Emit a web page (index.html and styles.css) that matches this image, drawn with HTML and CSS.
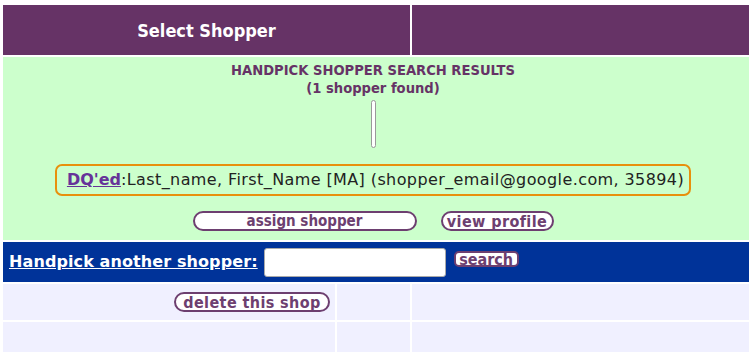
FILE: index.html
```html
<!DOCTYPE html>
<html lang="en">
<head>
  <meta charset="UTF-8">
  <title>Select Shopper</title>
  <link rel="stylesheet" href="styles.css">
</head>
<body>
  <!-- Main shop table -->
  <table class="shop">
    <colgroup>
      <col class="col-main">
      <col class="col-mid">
      <col>
    </colgroup>

    <!-- Title row -->
    <tr class="head">
      <td colspan="2" class="title">Select Shopper</td>
      <td></td>
    </tr>

    <!-- Search results -->
    <tr class="results">
      <td colspan="3">
        <div class="results-title">HANDPICK SHOPPER SEARCH RESULTS<br>(1 shopper found)</div>
        <div class="picklist"></div>
        <div class="match"><a href="#">DQ'ed</a>:Last_name, First_Name [MA] (shopper_email@google.com, 35894)</div>
        <div class="actions">
          <button class="pill assign">assign shopper</button>
          <button class="pill profile">view profile</button>
        </div>
      </td>
    </tr>

    <!-- Search for another shopper -->
    <tr class="search-row">
      <td colspan="3">
        <form class="search-form" onsubmit="return false">
          <a href="#" class="search-label">Handpick another shopper:</a>
          <input type="text" class="search-input">
          <button class="pill search">search</button>
        </form>
      </td>
    </tr>

    <tr class="light first">
      <td class="delete-cell"><button class="pill delete">delete this shop</button></td>
      <td></td>
      <td></td>
    </tr>
    <tr class="light second">
      <td></td>
      <td></td>
      <td></td>
    </tr>
  </table>
</body>
</html>
```

FILE: styles.css
```css
/* Page */
body {
  margin: 0;
  overflow: hidden;
  background: #fff;
  font-family: "DejaVu Sans", Verdana, sans-serif;
}

/* Table layout */
.shop {
  margin: 3px 0 0 1px;
  width: 756px;
  border-spacing: 2px;
  table-layout: fixed;
}

.shop td {
  padding: 0;
}

.col-main {
  width: 332px;
}

.col-mid {
  width: 73px;
}

/* Title row */
.head td {
  height: 50px;
  background: #663366;
}

.head .title {
  text-align: center;
  color: #fff;
  font-family: "DejaVu Sans Condensed", "DejaVu Sans", sans-serif;
  font-weight: bold;
  font-size: 18px;
}

/* Search results */
.results td {
  height: 183px;
  background: #ccffcc;
  vertical-align: top;
  text-align: center;
  padding-right: 12px;
}

.results-title {
  margin-top: 4px;
  color: #663366;
  font-family: "DejaVu Sans Condensed", "DejaVu Sans", sans-serif;
  font-weight: bold;
  font-size: 14.6px;
  line-height: 18px;
}

.picklist {
  width: 3px;
  height: 46px;
  margin: 3px auto 0;
  background: #fff;
  border: 1px solid #999;
  border-radius: 3px;
}

.match {
  display: inline-block;
  margin-top: 16px;
  padding: 5px 5px 5px 10px;
  border: 2px solid #e8900c;
  border-radius: 7px;
  font-size: 16px;
  line-height: 18px;
  letter-spacing: 0.4px;
  color: #222;
}

.match a {
  color: #663399;
  font-weight: bold;
  letter-spacing: 0;
}

.actions {
  display: flex;
  justify-content: center;
  gap: 24px;
  margin-top: 15px;
}

/* Pill buttons */
.pill {
  height: 20px;
  padding: 0;
  border: 2px solid #6d3f70;
  border-radius: 10px;
  background: #fff;
  color: #6d3f70;
  font-family: "DejaVu Sans Condensed", "DejaVu Sans", sans-serif;
  font-weight: bold;
  font-size: 16px;
  line-height: 15px;
  letter-spacing: 0.4px;
  cursor: pointer;
}

.assign {
  width: 224px;
  font-size: 15px;
  letter-spacing: 0;
}

.profile {
  width: 113px;
}

.delete {
  width: 156px;
}

.search {
  width: 65px;
  height: 16px;
  border-radius: 5px;
  line-height: 11px;
  letter-spacing: 0;
}

/* Search row */
.search-row td {
  height: 40px;
  background: #003399;
  vertical-align: top;
}

.search-form {
  display: flex;
  align-items: flex-start;
  margin: 0;
  padding: 6px 0 0 6px;
}

.search-label {
  margin-top: 5px;
  color: #fff;
  font-weight: bold;
  font-size: 16px;
  line-height: 18px;
  letter-spacing: 0.1px;
}

.search-input {
  width: 182px;
  height: 29px;
  margin-left: 6px;
  box-sizing: border-box;
  border: 1px solid #aaa;
  border-radius: 3px;
  background: #fff;
}

.search-form .search {
  margin: 3px 0 0 8px;
}

/* Lower rows */
.light td {
  background: #f0f0ff;
}

.light.first td {
  height: 36px;
}

.light.second td {
  height: 30px;
}

.delete-cell {
  text-align: right;
  vertical-align: middle;
}

.shop .delete-cell {
  padding-right: 5px;
}
```
